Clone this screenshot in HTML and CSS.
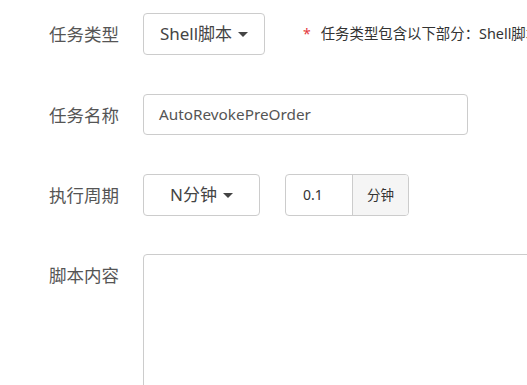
FILE: index.html
```html
<!DOCTYPE html>
<html lang="zh-CN">
<head>
<meta charset="utf-8">
<title>任务配置</title>
<link rel="stylesheet" href="styles.css">
</head>
<body>
<form class="task-form">
  <div class="form-row">
    <label class="form-label">任务类型</label>
    <div class="form-controls">
      <button type="button" class="dropdown-btn dropdown-btn--type">Shell脚本<span class="caret"></span></button>
      <span class="help-text"><span class="required">*</span>任务类型包含以下部分：Shell脚本、SQL语句、HTTP请求</span>
    </div>
  </div>
  <div class="form-row">
    <label class="form-label">任务名称</label>
    <div class="form-controls">
      <div class="text-input">AutoRevokePreOrder</div>
    </div>
  </div>
  <div class="form-row">
    <label class="form-label">执行周期</label>
    <div class="form-controls">
      <button type="button" class="dropdown-btn dropdown-btn--period">N分钟<span class="caret"></span></button>
      <div class="input-group">
        <div class="input-group__field">0.1</div>
        <div class="input-group__addon">分钟</div>
      </div>
    </div>
  </div>
  <div class="form-row form-row--top">
    <label class="form-label form-label--top">脚本内容</label>
    <div class="form-controls">
      <div class="textarea"></div>
    </div>
  </div>
</form>
</body>
</html>
```
FILE: styles.css
```css
html, body {
  margin: 0;
  padding: 0;
  background: #fff;
  overflow: hidden;
}
body {
  font-family: "Noto Sans", "Noto Sans CJK SC", sans-serif;
  color: #555;
  width: 527px;
  height: 385px;
}
.task-form {
  padding-top: 13px;
  display: flex;
  flex-direction: column;
  gap: 39px;
}
.form-row {
  display: flex;
  align-items: center;
  gap: 24px;
  white-space: nowrap;
}
.form-row--top {
  align-items: flex-start;
  margin-top: -1px;
}
.form-label {
  width: 119px;
  flex: none;
  text-align: right;
  font-size: 17.5px;
  line-height: 24px;
  color: #555;
}
.form-label--top {
  padding-top: 9px;
}
.form-controls {
  display: flex;
  align-items: center;
}
.dropdown-btn {
  font-family: inherit;
  height: 42px;
  box-sizing: border-box;
  border: 1px solid #ccc;
  border-radius: 4px;
  background: #fff;
  color: #444;
  font-size: 17px;
  line-height: 24px;
  padding: 0;
  display: flex;
  align-items: center;
  justify-content: center;
}
.dropdown-btn--type {
  width: 122px;
}
.dropdown-btn--period {
  width: 117px;
}
.caret {
  display: inline-block;
  width: 0;
  height: 0;
  margin-left: 6px;
  border-top: 5px solid #444;
  border-left: 5px solid transparent;
  border-right: 5px solid transparent;
}
.help-text {
  margin-left: 38px;
  font-size: 14.4px;
  line-height: 20px;
  color: #333;
  display: flex;
  align-items: center;
}
.required {
  color: #e4393c;
  margin-right: 10px;
  font-size: 14px;
}
.text-input {
  width: 325px;
  height: 41px;
  box-sizing: border-box;
  border: 1px solid #ccc;
  border-radius: 4px;
  padding: 0 15px;
  font-size: 15.3px;
  line-height: 39px;
  color: #555;
}
.input-group {
  margin-left: 25px;
  display: flex;
  height: 42px;
  box-sizing: border-box;
  border: 1px solid #ccc;
  border-radius: 4px;
  overflow: hidden;
}
.input-group__field {
  width: 67px;
  padding-left: 17px;
  box-sizing: border-box;
  font-size: 14px;
  line-height: 40px;
  color: #333;
  border-right: 1px solid #ccc;
}
.input-group__addon {
  width: 55px;
  background: #f5f5f5;
  text-align: center;
  font-size: 13.5px;
  line-height: 40px;
  color: #333;
}
.textarea {
  width: 420px;
  height: 180px;
  box-sizing: border-box;
  border: 1px solid #ccc;
  border-radius: 4px;
}
```
